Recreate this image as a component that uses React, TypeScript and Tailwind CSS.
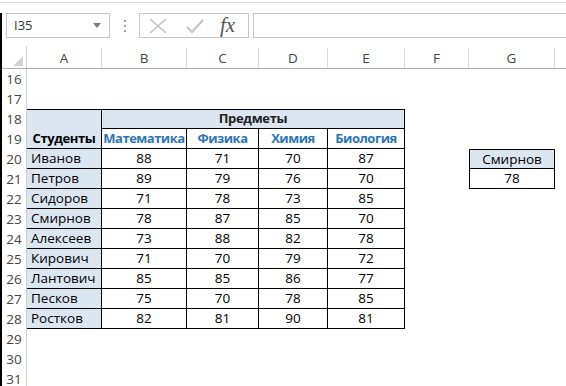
import React from "react";

const cols = [75, 85, 72, 69, 77, 64, 86];
const letters = ["A", "B", "C", "D", "E", "F", "G", "H"];

const students: [string, number[]][] = [
  ["Иванов", [88, 71, 70, 87]],
  ["Петров", [89, 79, 76, 70]],
  ["Сидоров", [71, 78, 73, 85]],
  ["Смирнов", [78, 87, 85, 70]],
  ["Алексеев", [73, 88, 82, 78]],
  ["Кирович", [71, 70, 79, 72]],
  ["Лантович", [85, 85, 86, 77]],
  ["Песков", [75, 70, 78, 85]],
  ["Ростков", [82, 81, 90, 81]],
];

const subjects = ["Математика", "Физика", "Химия", "Биология"];

const RowHead = ({ n }: { n: number }) => (
  <div className="w-[25px] shrink-0 border-r border-[#d0d0d0] flex items-center justify-center text-[13.5px] text-[#444]">
    {n}
  </div>
);

const Row = ({ n, children }: { n: number; children?: React.ReactNode }) => (
  <div className="flex h-[20px]">
    <RowHead n={n} />
    {children}
  </div>
);

export default function App() {
  return (
    <div
      className="w-[566px] h-[386px] overflow-hidden bg-white text-black"
      style={{ fontFamily: '"Open Sans", "Noto Sans", sans-serif' }}
    >
      <div className="h-[2px]" />
      <div className="h-px bg-[#dadada]" />
      <div className="border-l-2 border-black h-[383px]">
        {/* formula bar */}
        <div className="flex items-center h-[25px] mt-[10px]">
          <div className="ml-[4px] w-[104px] h-[25px] border border-[#c6c6c6] flex items-center justify-between pl-[7px] pr-[8px]">
            <span className="text-[13px] text-[#333]">I35</span>
            <svg width="8" height="5" viewBox="0 0 8 5">
              <path d="M0 0 L8 0 L4 5 Z" fill="#7a7a7a" />
            </svg>
          </div>
          <div className="w-[29px] flex flex-col items-center gap-[3px]">
            <span className="w-[2px] h-[2px] bg-[#a0a0a0]" />
            <span className="w-[2px] h-[2px] bg-[#a0a0a0]" />
            <span className="w-[2px] h-[2px] bg-[#a0a0a0]" />
          </div>
          <div className="w-[110px] h-[25px] border border-[#c6c6c6] flex items-center">
            <svg width="20" height="16" viewBox="0 0 20 16" className="ml-[8px]">
              <path d="M2 1 L18 15 M18 1 L2 15" stroke="#c4c4c4" strokeWidth="1.6" />
            </svg>
            <svg width="20" height="16" viewBox="0 0 20 16" className="ml-[17px]">
              <path d="M2 9 L7 14 L18 2" stroke="#c4c4c4" strokeWidth="2.2" fill="none" />
            </svg>
            <span
              className="ml-[15px] text-[21px] italic text-[#555] leading-none"
              style={{ fontFamily: '"Liberation Serif", serif' }}
            >
              fx
            </span>
          </div>
          <div className="ml-[4px] flex-1 h-[25px] border-y border-l border-[#c6c6c6]" />
        </div>

        {/* column headers */}
        <div className="flex h-[23px] mt-[8px] border-b border-[#ababab]">
          <div className="w-[25px] shrink-0 border-r border-[#d0d0d0] flex items-end justify-end pr-[3px] pb-[2px]">
            <svg width="10" height="10" viewBox="0 0 10 10">
              <path d="M10 0 L10 10 L0 10 Z" fill="#d2d2d2" />
            </svg>
          </div>
          {cols.map((w, i) => (
            <div
              key={i}
              style={{ width: w }}
              className="shrink-0 border-r border-[#dadada] flex items-center justify-center text-[13.5px] text-[#444] mt-[2px]"
            >
              {letters[i]}
            </div>
          ))}
          <div className="flex-1" />
        </div>

        <Row n={16} />
        <Row n={17} />
        <Row n={18}>
          <div className="w-[75px] shrink-0 bg-[#dce6f1] border-t border-r border-black" />
          <div className="w-[303px] shrink-0 bg-[#dce6f1] border-t border-r border-b border-black flex items-center justify-center text-[13px] font-bold tracking-[-0.3px] text-[#222]">
            Предметы
          </div>
        </Row>
        <Row n={19}>
          <div className="w-[75px] shrink-0 bg-[#dce6f1] border-r border-b border-black flex items-center justify-center text-[13px] font-bold tracking-[-0.4px]">
            Студенты
          </div>
          {subjects.map((s, i) => (
            <div
              key={s}
              style={{ width: cols[i + 1] }}
              className="shrink-0 border-r border-b border-black flex items-center justify-center text-[13px] font-bold tracking-[-0.5px] text-[#2e75b6]"
            >
              {s}
            </div>
          ))}
        </Row>
        {students.map(([name, vals], r) => (
          <Row n={20 + r} key={name}>
            <div className="w-[75px] shrink-0 bg-[#dce6f1] border-r border-b border-black flex items-center pl-[4px] text-[13.5px]">
              {name}
            </div>
            {vals.map((v, i) => (
              <div
                key={i}
                style={{ width: cols[i + 1] }}
                className="shrink-0 border-r border-b border-black flex items-center justify-center text-[13.5px]"
              >
                {v}
              </div>
            ))}
            {r < 2 && (
              <>
                <div className="w-[64px] shrink-0" />
                <div
                  className={
                    r === 0
                      ? "w-[86px] shrink-0 border-x border-b border-t border-black bg-[#dce6f1] flex items-center justify-center text-[13.5px]"
                      : "w-[86px] shrink-0 border-x border-b border-black flex items-center justify-center text-[13.5px]"
                  }
                >
                  {r === 0 ? "Смирнов" : "78"}
                </div>
              </>
            )}
          </Row>
        ))}
        <Row n={29} />
        <Row n={30} />
        <Row n={31} />
      </div>
    </div>
  );
}
